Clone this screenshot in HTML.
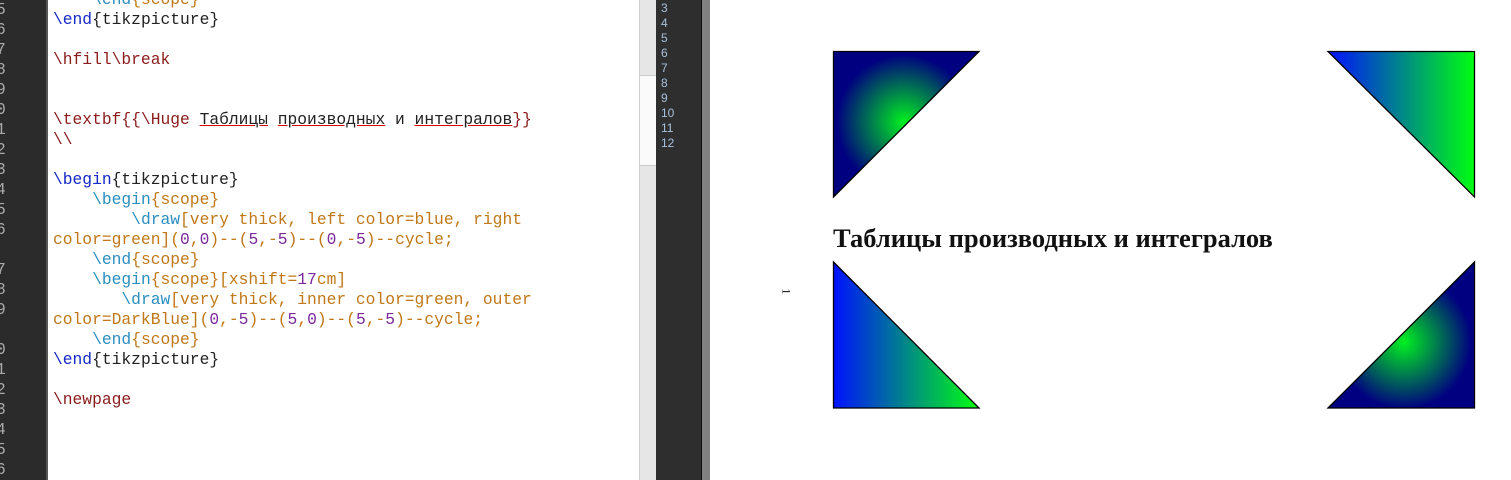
<!DOCTYPE html>
<html><head><meta charset="utf-8"><style>
html,body{margin:0;padding:0;width:1511px;height:480px;overflow:hidden;background:#fff;position:relative}
.g{position:absolute;left:0;top:0;width:46px;height:480px;background:#2b2b2b;border-right:2px solid #555}
.g div,.c div{height:20px;line-height:20px;white-space:pre;font-family:"Liberation Mono",monospace;font-size:16.3px}
.g div{color:#aaa;margin-left:-4px}
.c{position:absolute;left:53px;top:-10px;width:585px}
.sb{position:absolute;left:639px;top:0;width:16px;height:480px;background:#e6e6e6;border-left:1px solid #d0d0d0}
.th{position:absolute;left:640px;top:75px;width:16px;height:89px;background:#fafafa;border-top:1px solid #ccc;border-bottom:1px solid #ccc}
.d{position:absolute;left:656px;top:0;width:45px;height:480px;background:#2e2e2e;border-right:1px solid #111}
.d div{font-family:"Liberation Sans",sans-serif;font-size:12px;line-height:15px;height:15px;color:#a8c0dc;padding-left:5px}
.gr{position:absolute;left:702px;top:0;width:8px;height:480px;background:#808080}
.r{color:#8b1c1c}.b{color:#1428c8}.t{color:#2a8ec0}.o{color:#c07818}.k{color:#222}.p{color:#7a2a9a}
u{text-decoration:underline;text-decoration-color:#d00}
.title{position:absolute;left:833px;top:223px;font-family:"Liberation Serif","Noto Serif CJK SC",serif;font-size:26.5px;font-weight:bold;color:#111;letter-spacing:0px;white-space:nowrap}
.pn{position:absolute;left:783px;top:284px;font-family:"Liberation Serif",serif;font-size:12px;transform:rotate(90deg)}
</style></head><body>
<div class="g">
<div>5</div><div>6</div><div>7</div><div>8</div><div>9</div><div>0</div><div>1</div><div>2</div><div>3</div><div>4</div><div>5</div><div>6</div><div></div><div>7</div><div>8</div><div>9</div><div></div><div>0</div><div>1</div><div>2</div><div>3</div><div>4</div><div>5</div><div>6</div><div>7</div>
</div>
<div class="c">
<div>    <span class="t">\end</span><span class="o">{scope}</span></div>
<div><span class="b">\end</span><span class="k">{tikzpicture}</span></div>
<div></div>
<div class="r">\hfill\break</div>
<div></div><div></div>
<div><span class="r">\textbf{{\Huge </span><span class="k"><u>Таблицы</u> <u>производных</u> и <u>интегралов</u></span><span class="r">}}</span></div>
<div class="r">\\</div>
<div></div>
<div><span class="b">\begin</span><span class="k">{tikzpicture}</span></div>
<div>    <span class="t">\begin</span><span class="o">{scope}</span></div>
<div class="o">        <span class="t">\draw</span>[very thick, left color=blue, right</div>
<div class="o">color=green](<span class="p">0</span>,<span class="p">0</span>)--(<span class="p">5</span>,-<span class="p">5</span>)--(<span class="p">0</span>,-<span class="p">5</span>)--cycle;</div>
<div>    <span class="t">\end</span><span class="o">{scope}</span></div>
<div class="o">    <span class="t">\begin</span>{scope}[xshift=<span class="p">17</span>cm]</div>
<div class="o">       <span class="t">\draw</span>[very thick, inner color=green, outer</div>
<div class="o">color=DarkBlue](<span class="p">0</span>,-<span class="p">5</span>)--(<span class="p">5</span>,<span class="p">0</span>)--(<span class="p">5</span>,-<span class="p">5</span>)--cycle;</div>
<div>    <span class="t">\end</span><span class="o">{scope}</span></div>
<div><span class="b">\end</span><span class="k">{tikzpicture}</span></div>
<div></div>
<div class="r">\newpage</div>
</div>
<div class="sb"></div><div class="th"></div>
<div class="d"><div style="margin-top:1px">3</div><div>4</div><div>5</div><div>6</div><div>7</div><div>8</div><div>9</div><div>10</div><div>11</div><div>12</div></div>
<div class="gr"></div>
<svg style="position:absolute;left:0;top:0" width="1511" height="480">
<defs>
<radialGradient id="rg1" gradientUnits="userSpaceOnUse" cx="904" cy="122" r="90"><stop offset="0" stop-color="#00f020"/><stop offset="0.75" stop-color="#000080"/><stop offset="1" stop-color="#000080"/></radialGradient>
<radialGradient id="rg2" gradientUnits="userSpaceOnUse" cx="1404" cy="342" r="90"><stop offset="0" stop-color="#00f020"/><stop offset="0.75" stop-color="#000080"/><stop offset="1" stop-color="#000080"/></radialGradient>
<linearGradient id="lg1" gradientUnits="userSpaceOnUse" x1="1328" y1="0" x2="1475" y2="0"><stop offset="0" stop-color="#0010ff"/><stop offset="1" stop-color="#00ff10"/></linearGradient>
<linearGradient id="lg2" gradientUnits="userSpaceOnUse" x1="833" y1="0" x2="979" y2="0"><stop offset="0" stop-color="#0010ff"/><stop offset="1" stop-color="#00ff10"/></linearGradient>
</defs>
<polygon points="833.5,51.5 979,51.5 833.5,197" fill="url(#rg1)" stroke="#000" stroke-width="1.3"/>
<polygon points="1328,51.5 1474.5,51.5 1474.5,197" fill="url(#lg1)" stroke="#000" stroke-width="1.3"/>
<polygon points="833.5,262 833.5,408 979,408" fill="url(#lg2)" stroke="#000" stroke-width="1.3"/>
<polygon points="1474.5,262 1474.5,408 1328,408" fill="url(#rg2)" stroke="#000" stroke-width="1.3"/>
</svg>
<div class="title">Таблицы производных и интегралов</div>
<div class="pn">1</div>
</body></html>
